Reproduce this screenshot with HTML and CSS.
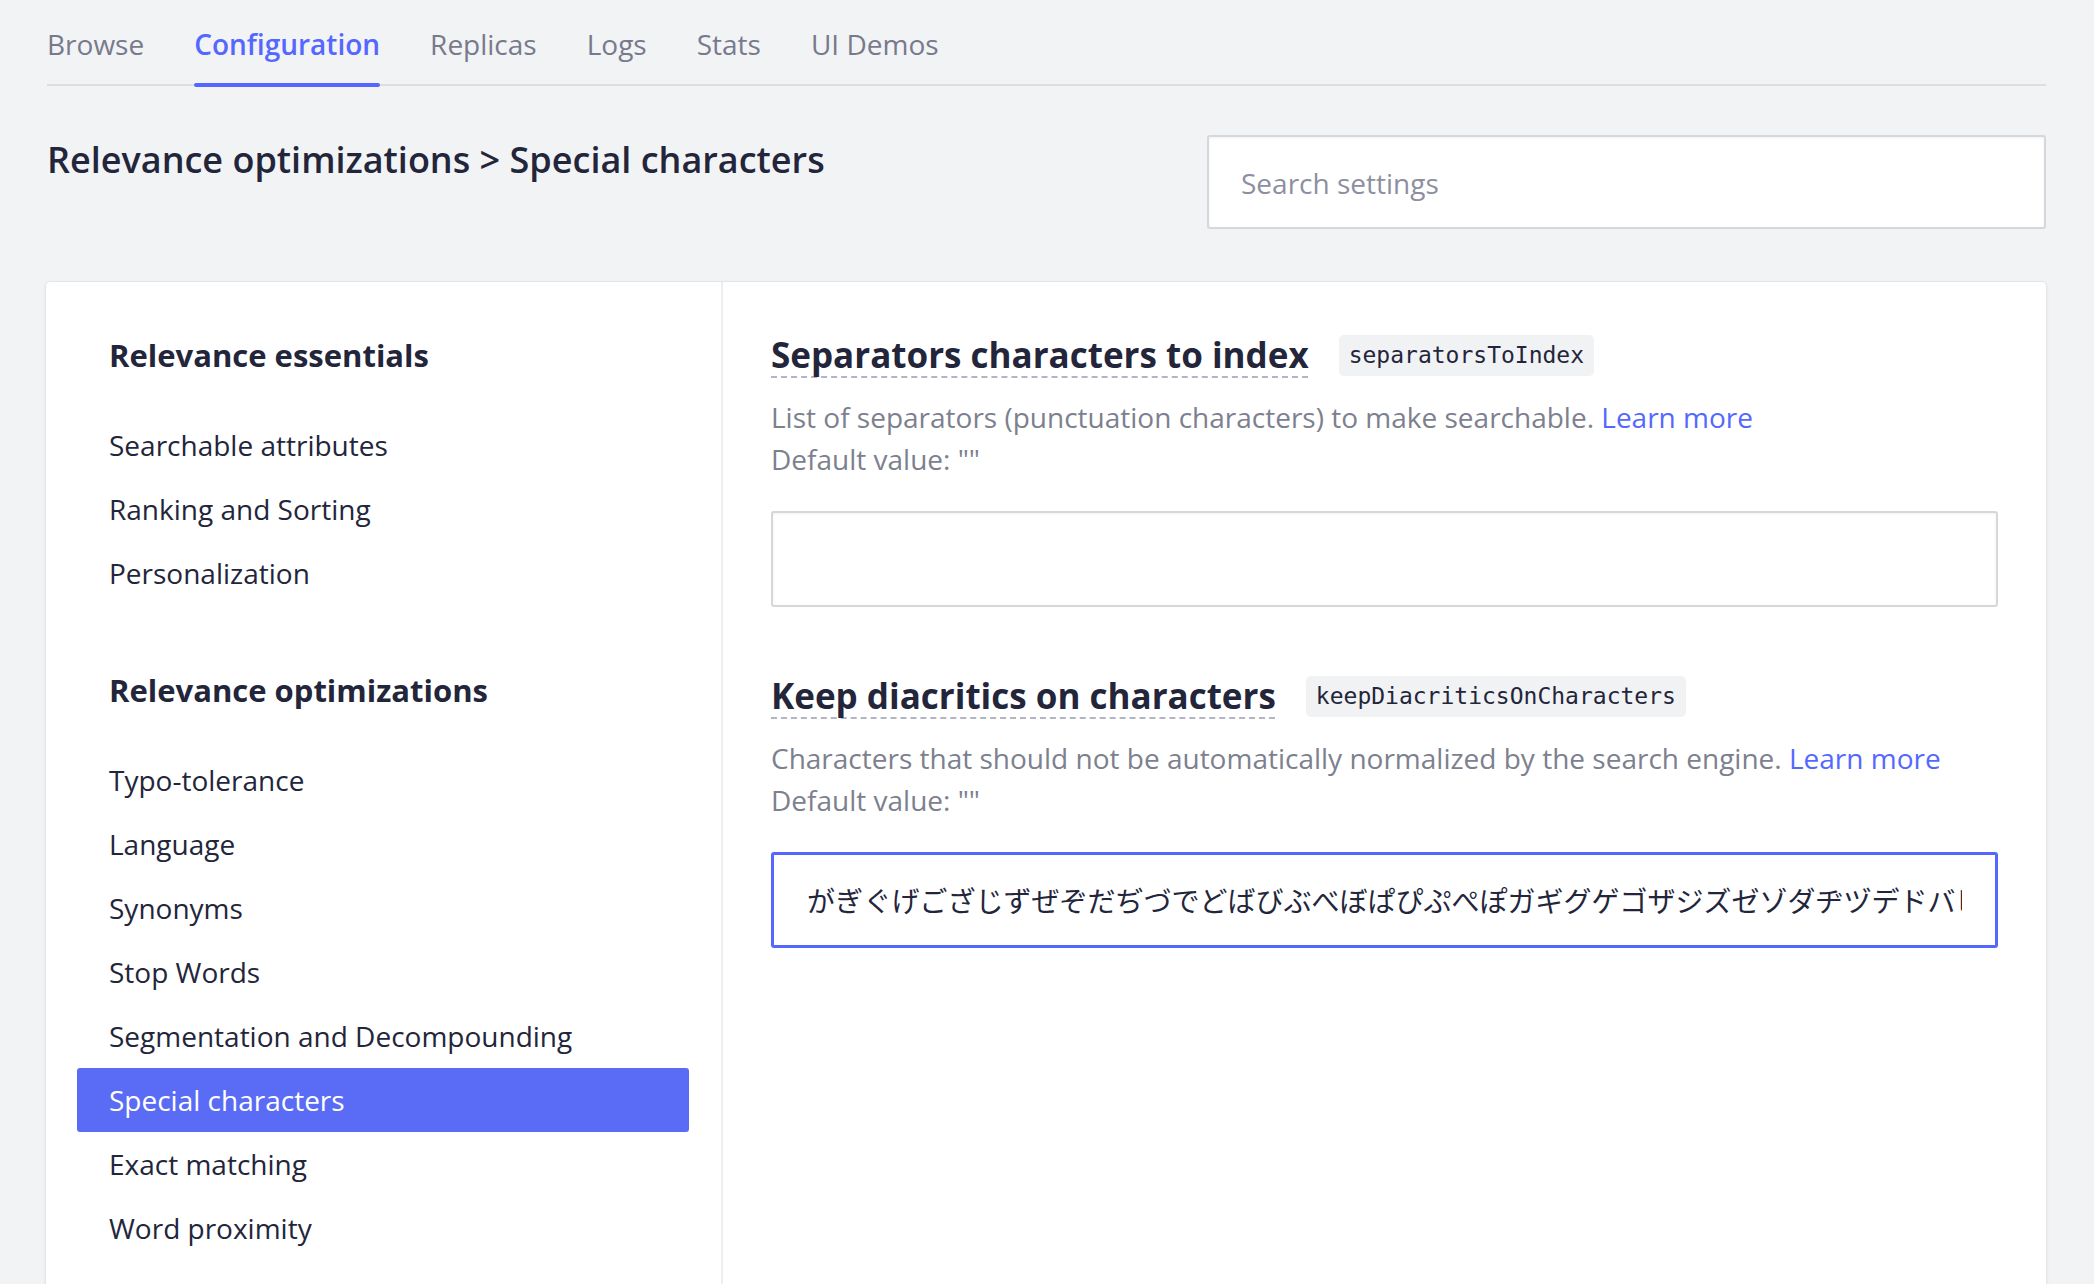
FILE: index.html
```html
<!DOCTYPE html>
<html lang="en">
<head>
<meta charset="utf-8">
<title>Configuration</title>
<link rel="stylesheet" href="styles.css">
</head>
<body>
<nav class="tabs">
  <a class="tab">Browse</a>
  <a class="tab tab-active">Configuration</a>
  <a class="tab">Replicas</a>
  <a class="tab">Logs</a>
  <a class="tab">Stats</a>
  <a class="tab">UI Demos</a>
</nav>

<header class="page-head">
  <h1 class="crumbs">Relevance optimizations &gt; Special characters</h1>
  <input class="search" type="text" placeholder="Search settings">
</header>

<main class="card">
  <aside class="sidebar">
    <section class="group">
      <h2 class="group-title">Relevance essentials</h2>
      <ul class="menu">
        <li class="menu-item">Searchable attributes</li>
        <li class="menu-item">Ranking and Sorting</li>
        <li class="menu-item">Personalization</li>
      </ul>
    </section>
    <section class="group">
      <h2 class="group-title">Relevance optimizations</h2>
      <ul class="menu">
        <li class="menu-item">Typo-tolerance</li>
        <li class="menu-item">Language</li>
        <li class="menu-item">Synonyms</li>
        <li class="menu-item">Stop Words</li>
        <li class="menu-item">Segmentation and Decompounding</li>
        <li class="menu-item menu-item-active">Special characters</li>
        <li class="menu-item">Exact matching</li>
        <li class="menu-item">Word proximity</li>
      </ul>
    </section>
  </aside>

  <div class="content">
    <section class="setting">
      <div class="setting-head">
        <h3 class="setting-title">Separators characters to index</h3>
        <code class="setting-key">separatorsToIndex</code>
      </div>
      <p class="setting-desc">List of separators (punctuation characters) to make searchable. <a class="link">Learn more</a><br>Default value: ""</p>
      <input class="field" type="text" value="">
    </section>

    <section class="setting">
      <div class="setting-head">
        <h3 class="setting-title">Keep diacritics on characters</h3>
        <code class="setting-key">keepDiacriticsOnCharacters</code>
      </div>
      <p class="setting-desc">Characters that should not be automatically normalized by the search engine. <a class="link">Learn more</a><br>Default value: ""</p>
      <input class="field field-focus" type="text" value="がぎぐげござじずぜぞだぢづでどばびぶべぼぱぴぷぺぽガギグゲゴザジズゼゾダヂヅデドバビブベボパピプペポ">
    </section>
  </div>
</main>
</body>
</html>
```

FILE: styles.css
```css
* { box-sizing: border-box; }

html, body {
  margin: 0;
  padding: 0;
}

body {
  background: #f2f3f5;
  font-family: "Open Sans", "Noto Sans", "Noto Sans CJK JP", sans-serif;
  color: #23263b;
  padding: 0 48px 0 47px;
}

/* Tabs */
.tabs {
  display: flex;
  gap: 50px;
  border-bottom: 2px solid #dddee2;
}

.tab {
  position: relative;
  font-size: 28px;
  line-height: 38px;
  padding: 25px 0 21px;
  color: #777a8c;
  cursor: pointer;
}

.tab-active {
  color: #5468ff;
  font-weight: 600;
}

.tab-active::after {
  content: "";
  position: absolute;
  left: 0;
  right: 0;
  bottom: -3px;
  height: 4px;
  border-radius: 2px;
  background: #5468ff;
}

/* Page header */
.page-head {
  display: flex;
  justify-content: space-between;
  align-items: flex-start;
  margin-top: 49px;
}

.crumbs {
  margin: 0;
  font-size: 36px;
  line-height: 50px;
  font-weight: 600;
  color: #23263b;
}

.search {
  width: 839px;
  height: 94px;
  border: 2px solid #d6d7db;
  border-radius: 3px;
  background: #fff;
  box-shadow: inset 0 1px 3px rgba(0, 0, 0, 0.06);
  padding: 2px 32px 0;
  font-family: "Open Sans", sans-serif;
  font-size: 28px;
  color: #23263b;
  outline: none;
}

.search::placeholder {
  color: #8d8fa1;
}

/* Card */
.card {
  display: flex;
  margin-top: 53px;
  margin-left: -1px;
  background: #fff;
  border-radius: 4px;
  box-shadow: 0 0 0 1px #e4e5e9, 0 1px 4px rgba(0, 0, 0, 0.08);
  min-height: 1100px;
}

.sidebar {
  width: 677px;
  flex: none;
  border-right: 2px solid #eceef1;
  padding: 52px 32px 40px 31px;
}

.group + .group {
  margin-top: 64px;
}

.group-title {
  margin: 0 0 37px 32px;
  font-size: 31px;
  line-height: 42px;
  font-weight: 700;
  color: #23263b;
}

.menu {
  list-style: none;
  margin: 0;
  padding: 0;
}

.menu-item {
  height: 64px;
  line-height: 64px;
  padding-left: 32px;
  font-size: 28px;
  color: #23263b;
  border-radius: 3px;
  white-space: nowrap;
}

.menu-item-active {
  background: #5a6cf6;
  color: #fff;
}

/* Content */
.content {
  flex: 1;
  padding: 52px 48px 40px 48px;
}

.setting + .setting {
  margin-top: 68px;
}

.setting-head {
  display: flex;
  align-items: center;
  gap: 30px;
  height: 42px;
}

.setting-title {
  margin: 0;
  font-size: 35px;
  line-height: 42px;
  font-weight: 700;
  color: #23263b;
  text-decoration: underline dashed #b4b5c3;
  text-decoration-thickness: 2px;
  text-underline-offset: 8px;
}

.setting-key {
  font-family: "DejaVu Sans Mono", "Liberation Mono", monospace;
  font-size: 23px;
  line-height: 41px;
  padding: 0 10px;
  background: #f1f2f4;
  border-radius: 5px;
  color: #23263b;
}

.setting-desc {
  margin: 20px 0 31px;
  font-size: 28px;
  line-height: 42px;
  color: #7d808e;
}

.link {
  color: #5468ff;
  cursor: pointer;
}

.field {
  display: block;
  width: 100%;
  height: 96px;
  border: 2px solid #d6d7d9;
  border-radius: 3px;
  background: #fff;
  box-shadow: inset 0 1px 3px rgba(0, 0, 0, 0.06);
  padding: 0 34px;
  font-family: "Open Sans", "Noto Sans CJK JP", sans-serif;
  font-size: 28px;
  color: #23263b;
  outline: none;
}

.field-focus {
  border: 3px solid #5468ff;
  box-shadow: none;
  padding: 0 33px;
}
```
